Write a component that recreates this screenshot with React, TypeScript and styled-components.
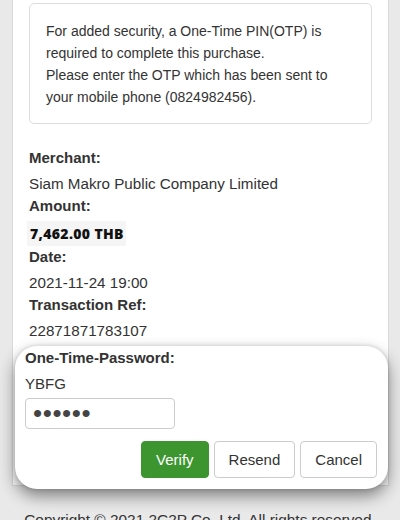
import React from "react";
import styled, { createGlobalStyle } from "styled-components";

const GlobalStyle = createGlobalStyle`
  html, body {
    margin: 0;
    padding: 0;
    background: #e9e9e9;
    font-family: "Liberation Sans", Arial, Helvetica, sans-serif;
    color: #333333;
    overflow: hidden;
  }
  * { box-sizing: border-box; }
`;

const Page = styled.div`
  position: relative;
  width: 400px;
  height: 520px;
  overflow: hidden;
`;

const Panel = styled.div`
  margin: 0 11px 0 12px;
  padding: 3px 16px 143px;
  background: #ffffff;
  border: 1px solid #dadada;
  border-top: none;
`;

const Notice = styled.div`
  border: 1px solid #dddddd;
  border-radius: 5px;
  padding: 16px 16px 15px;
  font-size: 14px;
  line-height: 22px;
  color: #333333;
`;

const Details = styled.dl`
  margin: 23px 0 0;
  padding: 0;
`;

const Label = styled.dt`
  font-size: 15px;
  line-height: 22px;
  font-weight: 700;
  color: #333333;
  margin: 0 0 4px;
`;

const Value = styled.dd<{ $strong?: boolean }>`
  margin: 0 0 0 ${(p) => (p.$strong ? "-2px" : "0")};
  font-size: ${(p) => (p.$strong ? "14px" : "15.2px")};
  line-height: 22px;
  color: ${(p) => (p.$strong ? "#111111" : "#333333")};
  font-weight: ${(p) => (p.$strong ? 800 : 400)};
  font-family: ${(p) =>
    p.$strong ? "'Open Sans', 'DejaVu Sans', sans-serif" : "inherit"};
  ${(p) =>
    p.$strong &&
    `
    display: inline-block;
    background: #f5f5f5;
    padding: 2px 2px 1px 3px;
    letter-spacing: 0.35px;
  `}
`;

const OtpCard = styled.div`
  position: absolute;
  left: 15px;
  top: 346px;
  width: 373px;
  height: 143px;
  background: #ffffff;
  border-radius: 22px;
  box-shadow: 0 7px 16px rgba(0, 0, 0, 0.45), 0 0 4px rgba(0, 0, 0, 0.15);
  padding: 2px 11px 0 10px;
  display: flex;
  flex-direction: column;
`;

const OtpTitle = styled.div`
  font-size: 15px;
  line-height: 20px;
  font-weight: 700;
  color: #333333;
`;

const RefCode = styled.div`
  font-size: 15px;
  line-height: 20px;
  margin-top: 6px;
  color: #333333;
`;

const OtpInput = styled.input`
  margin-top: 4px;
  width: 150px;
  height: 31px;
  border: 1px solid #cccccc;
  border-radius: 4px;
  padding: 0 7px;
  font-size: 26px;
  line-height: 29px;
  letter-spacing: 0.6px;
  color: #444444;
  font-family: "Liberation Sans", Arial, sans-serif;
  outline: none;
`;

const Actions = styled.div`
  margin-top: 12px;
  display: flex;
  justify-content: flex-end;
  gap: 5px;
`;

const Button = styled.button<{ $primary?: boolean }>`
  height: 37px;
  padding: 0 14px;
  border-radius: 4px;
  font-family: "Liberation Sans", Arial, sans-serif;
  font-size: 15px;
  cursor: pointer;
  color: ${(p) => (p.$primary ? "#ffffff" : "#333333")};
  background: ${(p) => (p.$primary ? "#3d952f" : "#ffffff")};
  border: 1px solid ${(p) => (p.$primary ? "#3d952f" : "#cccccc")};
`;

const Footer = styled.footer`
  padding-top: 25px;
  text-align: center;
  font-size: 15.4px;
  line-height: 18px;
  color: #333333;
  white-space: nowrap;
`;

export default function App() {
  return (
    <Page>
      <GlobalStyle />
      <Panel>
        <Notice>
          For added security, a One-Time PIN(OTP) is required to complete this
          purchase.
          <br />
          Please enter the OTP which has been sent to your mobile phone
          (0824982456).
        </Notice>
        <Details>
          <Label>Merchant:</Label>
          <Value>Siam Makro Public Company Limited</Value>
          <Label>Amount:</Label>
          <Value $strong>7,462.00 THB</Value>
          <Label>Date:</Label>
          <Value>2021-11-24 19:00</Value>
          <Label>Transaction Ref:</Label>
          <Value>22871871783107</Value>
        </Details>
      </Panel>
      <Footer>Copyright © 2021 2C2P Co. Ltd. All rights reserved.</Footer>
      <OtpCard>
        <OtpTitle>One-Time-Password:</OtpTitle>
        <RefCode>YBFG</RefCode>
        <OtpInput type="password" defaultValue="123456" readOnly />
        <Actions>
          <Button $primary>Verify</Button>
          <Button>Resend</Button>
          <Button>Cancel</Button>
        </Actions>
      </OtpCard>
    </Page>
  );
}
